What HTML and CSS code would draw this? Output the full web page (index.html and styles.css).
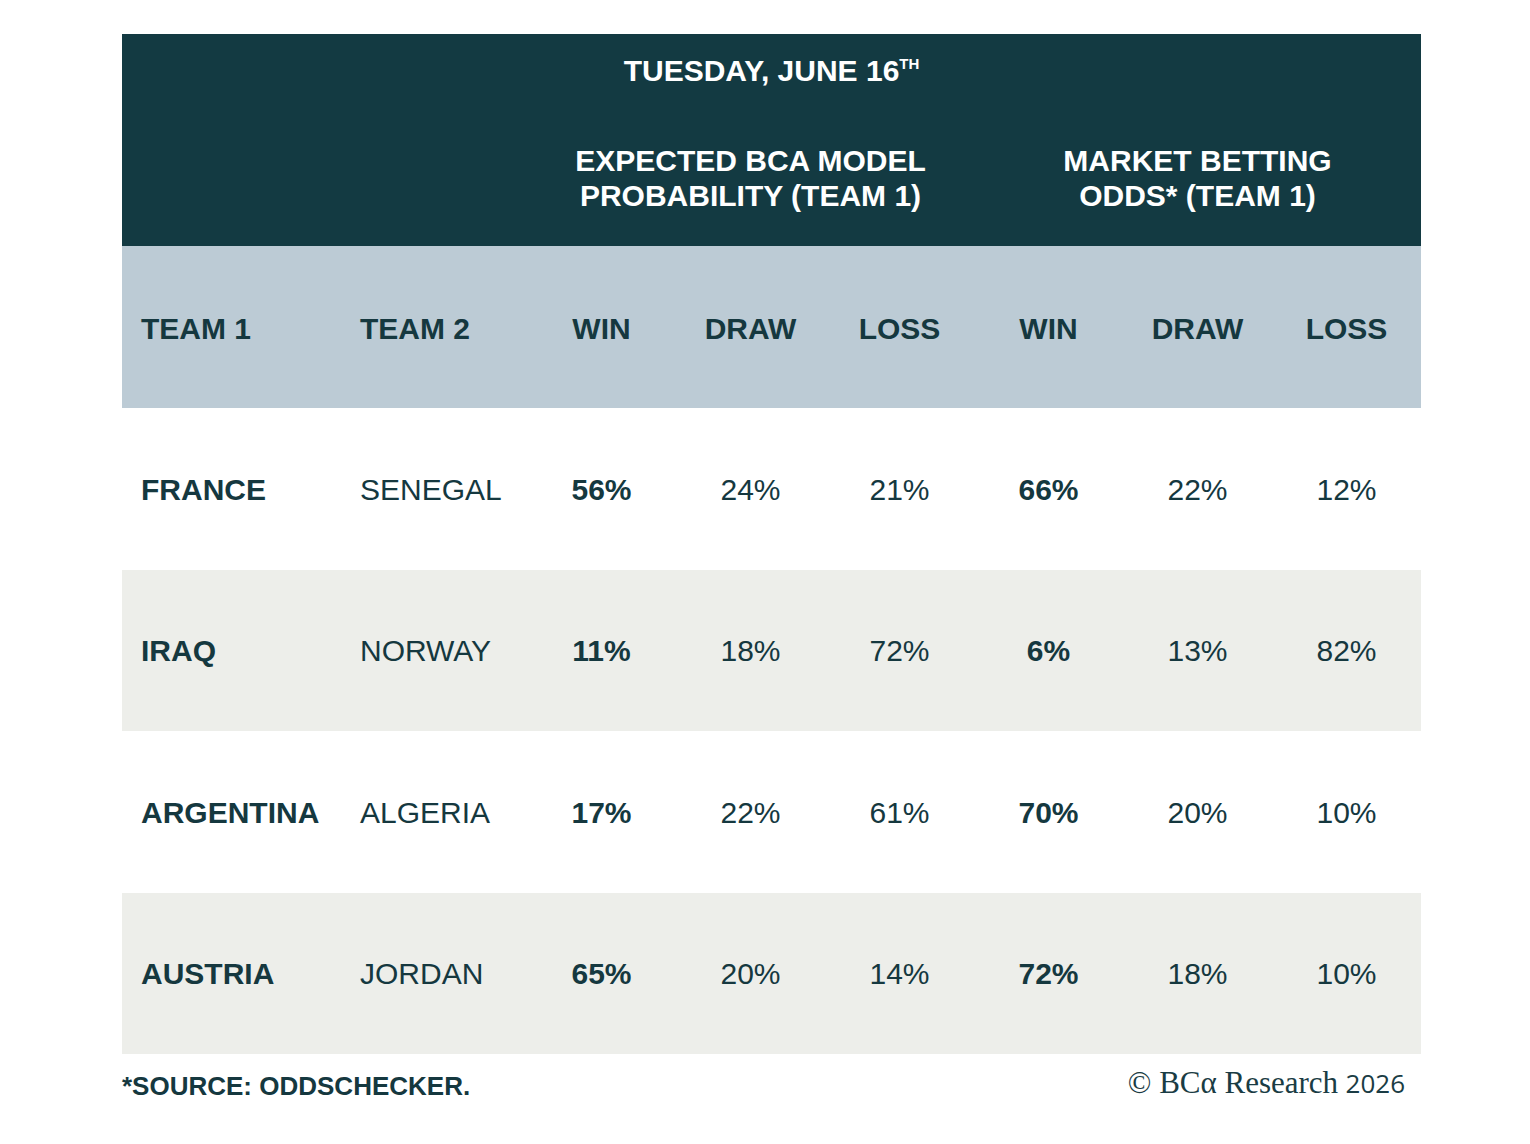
FILE: index.html
```html
<!DOCTYPE html>
<html lang="en">
<head>
<meta charset="utf-8">
<title>Tuesday, June 16th</title>
<link rel="stylesheet" href="styles.css">
</head>
<body>
<div class="page">
  <div class="table">
    <div class="top">
      <div class="title">TUESDAY, JUNE 16<sup>TH</sup></div>
      <div class="groups">
        <div class="spacer"></div>
        <div class="group">EXPECTED BCA MODEL<br>PROBABILITY (TEAM 1)</div>
        <div class="group">MARKET BETTING<br>ODDS* (TEAM 1)</div>
      </div>
    </div>
    <div class="row head">
      <div class="c left">TEAM 1</div>
      <div class="c left">TEAM 2</div>
      <div class="c">WIN</div>
      <div class="c">DRAW</div>
      <div class="c">LOSS</div>
      <div class="c">WIN</div>
      <div class="c">DRAW</div>
      <div class="c">LOSS</div>
    </div>
    <div class="row">
      <div class="c left b">FRANCE</div>
      <div class="c left">SENEGAL</div>
      <div class="c b">56%</div>
      <div class="c">24%</div>
      <div class="c">21%</div>
      <div class="c b">66%</div>
      <div class="c">22%</div>
      <div class="c">12%</div>
    </div>
    <div class="row alt">
      <div class="c left b">IRAQ</div>
      <div class="c left">NORWAY</div>
      <div class="c b">11%</div>
      <div class="c">18%</div>
      <div class="c">72%</div>
      <div class="c b">6%</div>
      <div class="c">13%</div>
      <div class="c">82%</div>
    </div>
    <div class="row">
      <div class="c left b">ARGENTINA</div>
      <div class="c left">ALGERIA</div>
      <div class="c b">17%</div>
      <div class="c">22%</div>
      <div class="c">61%</div>
      <div class="c b">70%</div>
      <div class="c">20%</div>
      <div class="c">10%</div>
    </div>
    <div class="row alt">
      <div class="c left b">AUSTRIA</div>
      <div class="c left">JORDAN</div>
      <div class="c b">65%</div>
      <div class="c">20%</div>
      <div class="c">14%</div>
      <div class="c b">72%</div>
      <div class="c">18%</div>
      <div class="c">10%</div>
    </div>
  </div>
  <div class="footer">
    <div class="source">*SOURCE: ODDSCHECKER.</div>
    <div class="copy"><span class="serif">© BCα Research</span> <span class="year">2026</span></div>
  </div>
</div>
</body>
</html>
```

FILE: styles.css
```css
html, body {
  margin: 0;
  padding: 0;
  background: #ffffff;
}
body {
  font-family: "Liberation Sans", Arial, sans-serif;
  color: #15383f;
}
.page {
  padding: 34px 0 0 122px;
  width: 1299px;
}
.table {
  width: 1299px;
}
.top {
  background: #133a42;
  color: #ffffff;
  font-weight: 700;
  font-size: 30px;
  height: 212px;
  box-sizing: border-box;
  padding-top: 19px;
}
.title {
  text-align: center;
  line-height: 35px;
}
.title sup {
  font-size: 15px;
  vertical-align: top;
  line-height: 15px;
  position: relative;
  top: 3px;
}
.groups {
  display: grid;
  grid-template-columns: 405px 447px 447px;
  margin-top: 55px;
}
.group {
  text-align: center;
  line-height: 35px;
}
.row {
  display: grid;
  grid-template-columns: 219px 186px repeat(6, 149px);
  height: 161.5px;
  align-items: center;
  font-size: 30px;
  padding-top: 2px;
  box-sizing: border-box;
}
.row.head {
  background: #bccbd5;
  height: 162px;
  font-weight: 700;
  padding-top: 4px;
}
.row.alt {
  background: #edeeea;
}
.c {
  text-align: center;
  white-space: nowrap;
}
.c.left {
  text-align: left;
  padding-left: 19px;
}
.c.b {
  font-weight: 700;
}
.footer {
  display: flex;
  justify-content: space-between;
  align-items: center;
  margin-top: 14px;
}
.source {
  font-weight: 700;
  font-size: 26px;
  line-height: 30px;
}
.copy {
  padding-right: 16px;
  color: #1a3c44;
  line-height: 30px;
  white-space: nowrap;
}
.serif {
  font-family: "Liberation Serif", "Times New Roman", serif;
  font-size: 31px;
}
.year {
  font-family: "Open Sans", sans-serif;
  font-size: 26px;
  margin-left: 3px;
}
```
